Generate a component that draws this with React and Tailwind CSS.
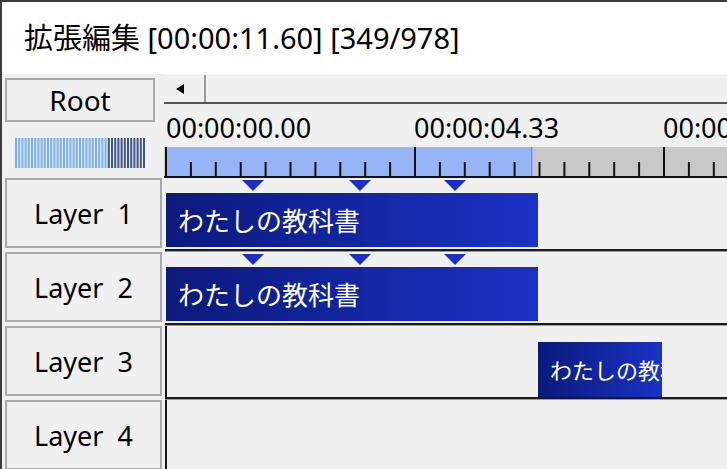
import React from "react";

const FONT = "font-['Noto_Sans','Noto_Sans_CJK_JP',sans-serif]";

function Meter() {
  const bars = [];
  for (let i = 0; i < 41; i++) {
    const x = i * 3.2;
    bars.push(
      <rect key={i} x={x} y={0} width={2} height={30} fill={i < 29 ? "#78aef7" : "#3d5588"} />
    );
  }
  return (
    <svg width="132" height="30" className="block">
      {bars}
    </svg>
  );
}

function Ruler() {
  const ticks = [];
  const step = 24.9;
  for (let i = 0; i < 24; i++) {
    const x = 1 + i * step;
    const major = i % 10 === 0;
    ticks.push(
      <rect key={i} x={x} y={major ? 0 : 15} width={2} height={major ? 30 : 15} fill="#111" />
    );
  }
  return (
    <svg width="563" height="31" className="block">
      <rect x="0" y="0" width="563" height="31" fill="#c8c8c8" />
      <rect x="1" y="0" width="367" height="29" fill="#97b5f6" />
      <rect x="367" y="0" width="1.5" height="29" fill="#6f8ff0" />
      {ticks}
      <rect x="0" y="29" width="563" height="2" fill="#111" />
    </svg>
  );
}

function Marker({ x, y }) {
  return (
    <svg
      width="22"
      height="11"
      className="absolute"
      style={{ left: x - 11, top: y }}
    >
      <polygon points="0,0 22,0 11,11" fill="#1a2fc4" />
    </svg>
  );
}

function Clip({ left, top, width, height, small }) {
  return (
    <div
      className={`absolute overflow-hidden whitespace-nowrap bg-gradient-to-r from-[#0c1a7c] to-[#1a32c6] text-white leading-none flex items-center pl-[12px] pt-[1px] ${small ? "text-[22px]" : "text-[26px]"}`}
      style={{ left, top, width, height }}
    >
      わたしの教科書
    </div>
  );
}

function LayerButton({ label }) {
  return (
    <div className="w-[162px] shrink-0 pl-[3px]">
      <div className="w-[157px] h-[70px] border-2 border-[#a9a9a9] bg-[#f0f0f0] flex items-center justify-center text-[27px] leading-none text-black whitespace-pre">
        {label}
      </div>
    </div>
  );
}

function LayerRow({ label, children, framed }) {
  return (
    <div className="flex h-[74px] shrink-0">
      <LayerButton label={label} />
      <div className="relative flex-1">
        {framed && <div className="absolute left-[1px] top-0 bottom-0 w-[2px] bg-[#111]" />}
        {children}
        <div className="absolute left-[1px] right-0 bottom-[1px] h-[2px] bg-[#1a1a1a]" />
        <div className="absolute left-[1px] right-0 bottom-0 h-[1px] bg-[#9a9a9a]" />
      </div>
    </div>
  );
}

export default function App() {
  return (
    <div className={`w-[727px] h-[469px] overflow-hidden bg-[#f0f0f0] border-t-2 border-l-2 border-[#3c3c3c] flex flex-col ${FONT} text-black`}>
      <div className="h-[72px] shrink-0 bg-white flex items-center pl-[22px] text-[29px] leading-none whitespace-nowrap pb-[2px]">
        拡張編集 [00:00:11.60] [349/978]
      </div>
      <div className="flex h-[104px] shrink-0">
        <div className="w-[162px] shrink-0 pl-[3px] pt-[4px]">
          <div className="w-[150px] h-[44px] border-2 border-[#a9a9a9] flex items-center justify-center text-[28px] leading-none">
            Root
          </div>
          <div className="mt-[16px] ml-[10px]">
            <Meter />
          </div>
        </div>
        <div className="flex-1 flex flex-col">
          <div className="h-[30px] shrink-0 flex border-t border-[#f7f7f7] border-b-2 border-b-[#555]">
            <div className="w-[42px] h-full flex items-center pl-[12px] border-r-2 border-[#9a9a9a] bg-[#f0f0f0]">
              <svg width="8" height="10"><polygon points="8,0 8,10 0,5" fill="#000" /></svg>
            </div>
            <div className="flex-1 bg-[#f0f0f0]" />
          </div>
          <div className="h-[43px] shrink-0 flex items-end pb-[6px] text-[27px] leading-none whitespace-nowrap overflow-hidden">
            <div className="w-[250px] shrink-0 pl-[2px]">00:00:00.00</div>
            <div className="w-[249px] shrink-0">00:00:04.33</div>
            <div className="w-[64px] shrink-0 overflow-hidden">00:00:08.66</div>
          </div>
          <Ruler />
        </div>
      </div>
      <LayerRow label="Layer  1">
        <Marker x={89} y={2} />
        <Marker x={196} y={2} />
        <Marker x={291} y={2} />
        <Clip left={2} top={15} width={372} height={54} />
      </LayerRow>
      <LayerRow label="Layer  2">
        <Marker x={89} y={2} />
        <Marker x={196} y={2} />
        <Marker x={291} y={2} />
        <Clip left={2} top={15} width={372} height={54} />
      </LayerRow>
      <LayerRow label="Layer  3" framed>
        <Clip left={374} top={16} width={124} height={55} small />
      </LayerRow>
      <LayerRow label="Layer  4" framed />
    </div>
  );
}
